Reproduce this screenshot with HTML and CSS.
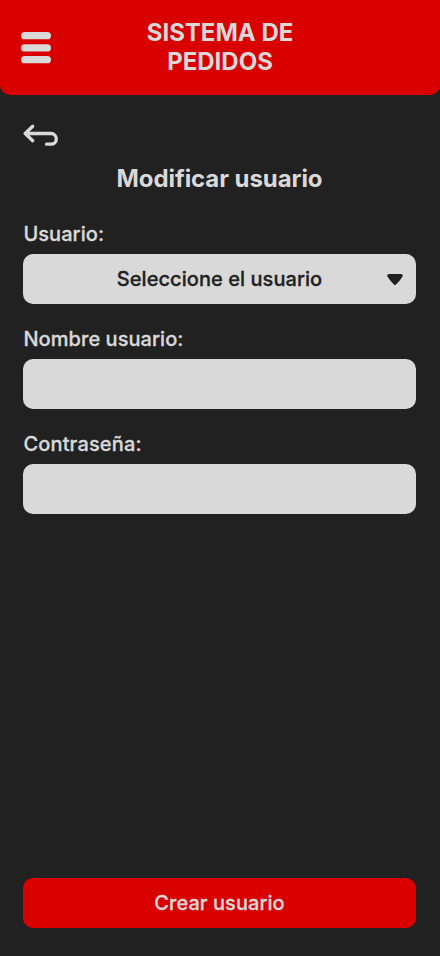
FILE: index.html
```html
<!DOCTYPE html>
<html lang="es">
<head>
<meta charset="utf-8">
<meta name="viewport" content="width=device-width, initial-scale=1">
<title>Sistema de pedidos</title>
<link rel="stylesheet" href="styles.css">
</head>
<body>
<header class="topbar">
  <button class="menu" aria-label="Menú"><svg width="30" height="32" viewBox="0 0 30 32" fill="#d9d9d9"><rect y="0" width="30" height="7.300" rx="3.650"/><rect y="12.300" width="30" height="7.300" rx="3.650"/><rect y="24" width="30" height="7.300" rx="3.650"/></svg></button>
  <h1>SISTEMA DE<br>PEDIDOS</h1>
</header>
<main class="content">
  <a class="back" href="#" aria-label="Volver">
    <svg width="36" height="24" viewBox="0 0 36 24" fill="none" stroke="#d9d9d9" stroke-width="3.300" stroke-linecap="round" stroke-linejoin="round"><path d="M9.700 2.300L2.200 9.500L9.700 16.700M2.200 9.500H28C31 9.500 33.300 12 33.300 15C33.300 18 31 20.200 28 20.200H23.500"/></svg>
  </a>
  <h2>Modificar usuario</h2>
  <form class="form">
    <div class="field">
      <span class="label">Usuario:</span>
      <div class="box select"><span>Seleccione el usuario</span>
        <svg class="caret" width="16" height="12" viewBox="0 0 16 12"><path d="M2 0H14Q16.700 .3 15.300 3Q13 6.500 9.500 10Q8 12.300 6.500 10Q3 6.500 .7 3Q-.7 .3 2 0Z" fill="#212121"/></svg>
      </div>
    </div>
    <div class="field"><span class="label">Nombre usuario:</span><div class="box"></div></div>
    <div class="field"><span class="label contrasena">Contraseña:</span><div class="box"></div></div>
    <button type="button" class="submit">Crear usuario</button>
  </form>
</main>
</body>
</html>
```
FILE: styles.css
```css
* { box-sizing: border-box; }
body {
  margin: 0;
  height: 956px;
  display: flex;
  flex-direction: column;
  background: #212121;
  color: #d9d9d9;
  font-family: Inter, sans-serif;
}
h1, h2 { margin: 0; text-align: center; }
.topbar {
  display: grid;
  grid-template-columns: 30px 1fr 30px;
  align-items: center;
  height: 95px;
  padding: 0 21px;
  background: #d90000;
  border-radius: 0 0 10px 10px;
}
.topbar h1 { padding-bottom: 2px; font-size: 24px; line-height: 29px; font-weight: 700; }
.menu { padding: 0; border: 0; background: none; }
.menu svg { display: block; }
.content {
  flex: 1;
  display: flex;
  flex-direction: column;
  padding: 29px 24px 28px 23px;
}
.back { height: 24px; }
.back svg { display: block; }
h2 { margin-top: 16px; font-size: 24px; line-height: 29px; font-weight: 700; letter-spacing: -.07px; }
.form { flex: 1; display: flex; flex-direction: column; gap: 23px; margin-top: 29px; }
.label, .select, .submit {
  font: 500 20px/24px Inter, sans-serif;
  letter-spacing: .06px;
  -webkit-text-stroke: .3px currentColor;
}
.label { display: block; height: 32px; padding-left: .4px; }
.contrasena { letter-spacing: .16px; }
.box { height: 50px; border-radius: 10px; background: #d9d9d9; }
.select {
  position: relative;
  display: flex;
  align-items: center;
  justify-content: center;
  color: #212121;
}
.caret { position: absolute; right: 13px; top: 20px; }
.submit {
  height: 50px;
  margin-top: auto;
  border: 0;
  border-radius: 10px;
  background: #d90000;
  color: #d9d9d9;
}
```
